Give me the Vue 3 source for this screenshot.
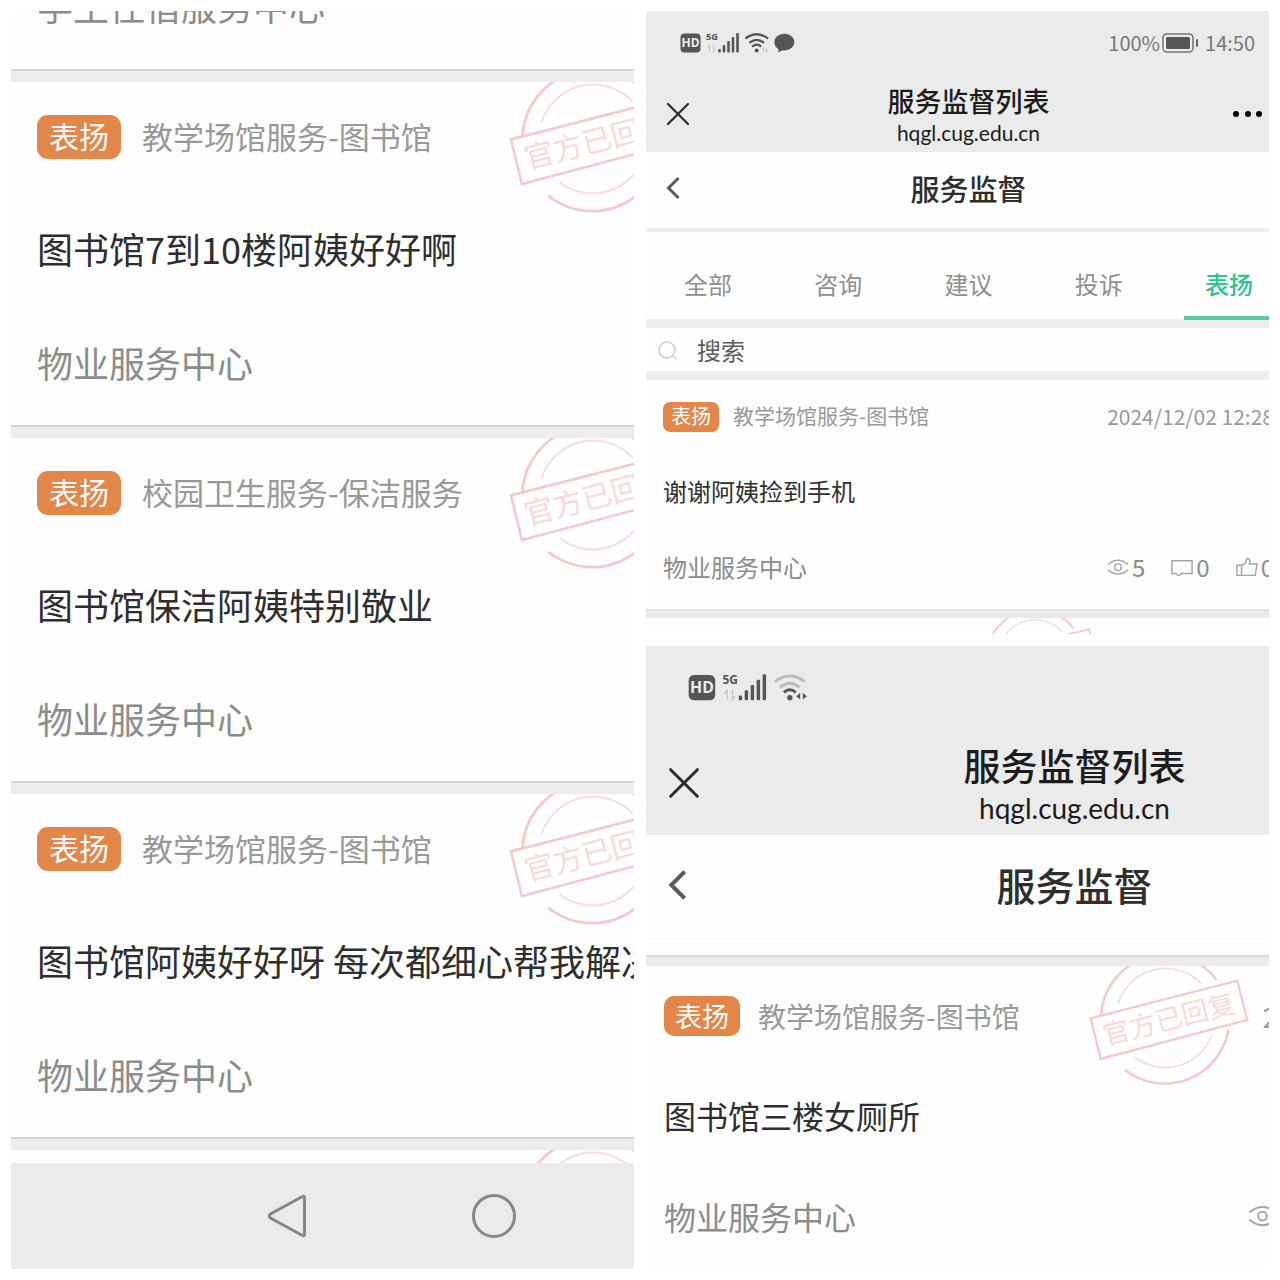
<template>
  <main class="collage">
    <section v-for="panel in panels" :key="panel.name" class="panel" :class="panel.name">
      <div class="screen">
        <!-- 微信顶部栏 -->
        <header v-if="panel.header" class="wx-head">
          <div class="status">
            <svg class="status-icons" viewBox="0 0 116 22">
              <rect x="0.5" y="1.5" width="20" height="19" rx="4" fill="#555" />
              <text x="10.5" y="15" text-anchor="middle" class="hd">HD</text>
              <text x="26" y="8" class="net">5G</text>
              <path d="M29.5 20v-7l-2 2.5M33.5 13v7l2-2.5" class="faint" />
              <g fill="#555">
                <rect x="38.2" y="17" width="2.6" height="3.5" rx="1" />
                <rect x="42.7" y="13" width="2.6" height="7.5" rx="1" />
                <rect x="47.2" y="9" width="2.6" height="11.5" rx="1" />
                <rect x="51.7" y="5" width="2.6" height="15.5" rx="1" />
                <rect x="56.2" y="1" width="2.6" height="19.5" rx="1" />
              </g>
              <g fill="none" stroke-width="2.2">
                <path d="M65.5 6.5Q76.7-2 88 6.5" :stroke="panel.weakWifi ? '#bcbcbc' : '#555'" />
                <path d="M69.3 10.8Q76.7 4.8 84 10.8" :stroke="panel.weakWifi ? '#bcbcbc' : '#555'" />
                <path d="M72.2 14.6Q76.7 10.8 81.2 14.6" stroke="#555" />
              </g>
              <circle cx="76.7" cy="18.6" r="2" fill="#555" />
              <path v-if="panel.weakWifi" d="M84.5 15v5l-3-2.5zM86.5 15v5l3-2.5z" fill="#555" />
              <template v-else>
                <path d="M83.5 20v-4.5l-1.5 2M86.5 15.5v4.5l1.5-2" class="faint" />
                <path
                  d="M104.300 1.8c5.600 0 10 3.600 10 8.300s-4.400 8.400-10 8.400c-.8 0-1.5 0-2.200-.2-1 1-2.300 1.800-4 2.300.4-1 .5-2.200.3-3.300-2.500-1.500-4-4.200-4-7.200 0-4.700 4.300-8.300 9.900-8.300z"
                  fill="#555"
                />
              </template>
            </svg>
            <div class="status-right">
              <span>100%</span>
              <svg class="battery" viewBox="0 0 37 20">
                <rect x="1" y="1" width="30" height="18" rx="4" fill="none" stroke="#777" stroke-width="1.6" />
                <rect x="4" y="4" width="24" height="12" rx="1.5" fill="#555" />
                <rect x="34" y="6" width="2" height="8" rx="1" fill="#666" />
              </svg>
              <time>14:50</time>
            </div>
          </div>
          <div class="wx-nav">
            <button class="icon-btn" aria-label="关闭">
              <svg class="close" viewBox="0 0 24 24"><path d="M2 2l20 20M22 2L2 22" /></svg>
            </button>
            <div class="wx-title">
              <h1>服务监督列表</h1>
              <p>hqgl.cug.edu.cn</p>
            </div>
            <button class="icon-btn more" aria-label="更多">
              <svg width="40" height="8" viewBox="0 0 40 8">
                <circle cx="5" cy="4" r="3" />
                <circle cx="17" cy="4" r="3" />
                <circle cx="28" cy="4" r="3" />
              </svg>
            </button>
          </div>
        </header>

        <!-- 页面标题 -->
        <div v-if="panel.header" class="page-bar">
          <button class="icon-btn" aria-label="返回">
            <svg class="back" viewBox="0 0 16 24"><path d="M12.500 2L2.500 12l10 10" /></svg>
          </button>
          <h2>服务监督</h2>
        </div>

        <!-- 分类和搜索 -->
        <template v-if="panel.filter">
          <nav class="tabs">
            <button
              v-for="tab in tabs"
              :key="tab"
              :class="{ active: tab === current }"
              @click="current = tab"
            >
              {{ tab }}
            </button>
          </nav>
          <label class="search">
            <svg width="20" height="20" viewBox="0 0 20 20">
              <circle cx="9" cy="10" r="8" />
              <path d="M15 16l3.5 3.5" />
            </svg>
            <input v-model="keyword" type="text" placeholder="搜索" aria-label="搜索" />
          </label>
        </template>

        <!-- 评价列表 -->
        <ul class="list">
          <li v-if="panel.above" class="card-above">{{ panel.above }}</li>
          <li v-for="card in panel.cards" :key="card.title" class="card">
            <div class="card-head">
              <span class="badge">表扬</span>
              <span class="category">{{ card.category }}</span>
              <time v-if="card.date" class="date">{{ card.date }}</time>
            </div>
            <h3>{{ card.title }}</h3>
            <div class="card-foot">
              <span>物业服务中心</span>
              <div v-if="card.stats" class="stats">
                <span class="stat">
                  <svg viewBox="0 0 24 20">
                    <path d="M1 7Q12-2 23 7M1 13Q12 22 23 13" />
                    <circle cx="12" cy="10" r="3.6" />
                  </svg>
                  {{ card.stats[0] }}
                </span>
                <span class="stat">
                  <svg viewBox="0 0 24 20"><path d="M1 3h22v14H11l-3 3-2-3H1z" /></svg>
                  {{ card.stats[1] }}
                </span>
                <span class="stat">
                  <svg viewBox="0 0 24 20">
                    <path d="M1 8h5v11H1zM6 8l4-2 2-5.5c3 0 3.500 2 2.500 6H23l-2 12.500H6" />
                  </svg>
                  {{ card.stats[2] }}
                </span>
              </div>
            </div>
            <svg v-if="card.replied" class="stamp" viewBox="0 0 164 120">
              <use href="#stamp" />
            </svg>
          </li>
          <li v-if="panel.below" class="card-below">
            <svg class="stamp" viewBox="0 0 164 120"><use href="#stamp" /></svg>
          </li>
        </ul>

        <!-- 系统导航键 -->
        <footer v-if="panel.keys" class="keys">
          <button class="icon-btn" aria-label="返回键">
            <svg width="40" height="46" viewBox="0 0 40 46">
              <path d="M35.5 3.5Q37.5 2.5 37.5 5v36Q37.5 43.5 35.5 42.5L3.5 25Q1 23 3.5 21z" />
            </svg>
          </button>
          <button class="icon-btn" aria-label="主页键">
            <svg width="46" height="46" viewBox="0 0 46 46"><circle cx="23" cy="23" r="20.5" /></svg>
          </button>
        </footer>
      </div>
    </section>

    <!-- 官方已回复印章 -->
    <svg class="defs" width="0" height="0">
      <symbol id="stamp" viewBox="0 0 164 120">
        <g fill="none" stroke="#f5cacb">
          <path
            d="M13 50A64.5 64.5 0 0 1 128.7 14M140.3 64A64.5 64.5 0 0 1 37 104"
            stroke-width="2.6"
          />
          <path
            d="M30.3 37.3A49.5 49.5 0 0 1 113.7 18M123.7 69A49.5 49.5 0 0 1 47 91.3"
            stroke-width="1.8"
            stroke="#f9dcdc"
          />
          <path d="M2.7 52.3L149.3 14.7L159.3 54L12.7 93z" stroke-width="2.4" />
        </g>
        <text
          x="81"
          y="63"
          transform="rotate(-14.4 81 54)"
          text-anchor="middle"
          font-size="27"
          fill="#f8dada"
        >
          官方已回复
        </text>
      </symbol>
    </svg>
  </main>
</template>

<script setup>
import { ref } from 'vue'

const tabs = ['全部', '咨询', '建议', '投诉', '表扬']
const current = ref('表扬')
const keyword = ref('')

const panels = [
  {
    name: 'large',
    keys: true,
    above: '学生住宿服务中心',
    below: true,
    cards: [
      { category: '教学场馆服务-图书馆', title: '图书馆7到10楼阿姨好好啊', replied: true },
      { category: '校园卫生服务-保洁服务', title: '图书馆保洁阿姨特别敬业', replied: true },
      {
        category: '教学场馆服务-图书馆',
        title: '图书馆阿姨好好呀 每次都细心帮我解决',
        replied: true,
      },
    ],
  },
  {
    name: 'small',
    header: true,
    filter: true,
    below: true,
    cards: [
      {
        category: '教学场馆服务-图书馆',
        title: '谢谢阿姨捡到手机',
        date: '2024/12/02 12:28',
        stats: [5, 0, 0],
      },
    ],
  },
  {
    name: 'medium',
    header: true,
    weakWifi: true,
    cards: [
      {
        category: '教学场馆服务-图书馆',
        title: '图书馆三楼女厕所',
        date: '2024/12/02 12:28',
        stats: [12, 0, 0],
        replied: true,
      },
    ],
  },
]
</script>

<style>
body {
  margin: 0;
  background: #fff;
}
</style>

<style scoped>
.collage {
  display: grid;
  grid-template-columns: minmax(0, 1fr) minmax(0, 1fr);
  gap: 12px;
  padding: 11px;
  font-family: 'Noto Sans CJK SC', sans-serif;
  color: #2e2e2e;
}
.defs {
  position: absolute;
}
h1,
h2,
h3,
p,
ul {
  margin: 0;
  padding: 0;
  list-style: none;
}
button,
input {
  border: 0;
  padding: 0;
  background: none;
  font: inherit;
  color: inherit;
}
svg {
  display: block;
  flex: none;
}

/* 三块面板各自的尺寸 */
.panel {
  overflow: hidden;
  background: #fefefe;
}
.large {
  grid-row: span 2;
  --side: 26px;
  --text: 36px;
  --small-text: 31px;
  --badge-text: 30px;
  --badge-w: 84px;
  --badge-h: 44px;
  --badge-gap: 21px;
  --badge-radius: 11px;
  --row-head: 112px;
  --row-title: 108px;
  --row-foot: 123px;
  --lift: 4px;
  --band: 13px;
  --band-color: #ededf0;
  --band-line: #d4d4d8;
  --stamp-w: 180px;
  --stamp-right: -54px;
}
.small {
  --overflow: 22px;
  --side: 17px;
  --text: 24px;
  --small-text: 21px;
  --badge-text: 20px;
  --badge-w: 56px;
  --badge-h: 30px;
  --badge-gap: 14px;
  --badge-radius: 7px;
  --row-head: 75px;
  --row-title: 72px;
  --row-foot: 82px;
  --lift: 2px;
  --band: 9px;
  --band-color: #eaeaea;
  --band-line: #e2e2e2;
  --stamp-w: 123px;
  --stamp-right: 191px;
  --status-h: 64px;
  --nav-h: 77px;
  --nav-shift: 6px;
  --nav-line: 32px;
  --nav-title: 27px;
  --nav-url: 21px;
  --nav-side: 20px;
  --bar-h: 80px;
  --bar-title: 29px;
  --icon: 24px;
  --stat-icon: 22px;
  --stat-gap: 26px;
  --status-w: 116px;
}
.medium {
  --overflow: 234px;
  --side: 18px;
  --text: 32px;
  --small-text: 28px;
  --badge-text: 27px;
  --badge-w: 76px;
  --badge-h: 40px;
  --badge-gap: 18px;
  --badge-radius: 10px;
  --row-head: 102px;
  --row-title: 95px;
  --row-foot: 106px;
  --lift: 0px;
  --band: 11px;
  --band-color: #ebebeb;
  --band-line: #d9d9d9;
  --stamp-w: 164px;
  --stamp-right: 251px;
  --status-h: 84px;
  --nav-h: 105px;
  --nav-shift: 8px;
  --nav-line: 43px;
  --nav-title: 37px;
  --nav-url: 28px;
  --nav-side: 22px;
  --bar-h: 104px;
  --bar-title: 39px;
  --icon: 32px;
  --stat-icon: 29px;
  --stat-gap: 35px;
  --status-w: 154px;
}
/* 屏幕比可见区域更宽，右侧内容被截断 */
.screen {
  width: calc(100% + var(--overflow, 0px));
}

/* 顶部栏 */
.wx-head {
  background: #ebebeb;
}
.status {
  display: flex;
  align-items: center;
  justify-content: space-between;
  height: var(--status-h);
  padding: 0 36px 0 34px;
}
.medium .status {
  padding-left: 42px;
}
.status-icons {
  width: var(--status-w);
}
.hd {
  font: bold 12px 'Noto Sans', sans-serif;
  fill: #ebebeb;
}
.net {
  font: bold 9px 'Open Sans', sans-serif;
  fill: #555;
}
.faint {
  fill: none;
  stroke: #c4c4c4;
}
.status-right {
  display: flex;
  align-items: center;
  gap: 2px;
  font-size: 20px;
  line-height: 28px;
  color: #777;
}
.battery {
  width: 37px;
}
.status-right time {
  margin-left: 4px;
}
.wx-nav {
  display: grid;
  grid-template-columns: 80px 1fr 80px;
  align-items: center;
  height: var(--nav-h);
  padding: 0 var(--nav-side);
}
.wx-title {
  padding-top: var(--nav-shift);
  text-align: center;
  line-height: var(--nav-line);
  color: #1c1c1c;
}
.wx-title h1 {
  font-size: var(--nav-title);
  font-weight: 500;
}
.wx-title p {
  font-family: Lato, 'Noto Sans', sans-serif;
  font-size: var(--nav-url);
}
.icon-btn {
  display: flex;
  cursor: pointer;
}
.more {
  justify-self: end;
}
.close {
  width: var(--icon);
  fill: none;
  stroke: #2b2b2b;
  stroke-width: 2.2;
  stroke-linecap: round;
}
.page-bar {
  box-sizing: border-box;
  display: grid;
  grid-template-columns: 80px 1fr 80px;
  align-items: center;
  height: var(--bar-h);
  padding: 0 var(--nav-side) 4px;
}
.page-bar h2 {
  text-align: center;
  font-size: var(--bar-title);
  font-weight: 500;
  line-height: 1;
}
.back {
  height: var(--icon);
  fill: none;
  stroke: #5a5a5a;
  stroke-width: 3;
}
.small .page-bar {
  border-bottom: 4px solid #efefef;
}
.medium .page-bar {
  border-bottom: 1px solid #f7f7f7;
  margin-bottom: 16px;
}

/* 分类标签 */
.tabs {
  display: grid;
  grid-template-columns: repeat(5, 1fr);
  height: 87px;
  margin: 0 -3px;
  border-bottom: 9px solid #eee;
}
.tabs button {
  position: relative;
  padding-top: 15px;
  font-size: 24px;
  color: #8f8f8f;
  cursor: pointer;
}
.tabs .active {
  color: #2cc48c;
  font-weight: 500;
}
.tabs .active::after {
  content: '';
  position: absolute;
  left: 20px;
  right: 20px;
  bottom: -1px;
  height: 4px;
  background: #5cc8a2;
}
.search {
  display: flex;
  align-items: center;
  gap: 19px;
  height: 43px;
  padding-left: 12px;
  border-bottom: 9px solid #eee;
}
.search svg {
  fill: none;
  stroke: #cfcfcf;
  stroke-width: 1.6;
}
.search input {
  flex: 1;
  min-width: 0;
  height: 43px;
  font-size: 24px;
  outline: none;
}
.search input::placeholder {
  color: #5c5c5c;
  opacity: 1;
}

/* 评价卡片 */
.card,
.card-above {
  position: relative;
  box-sizing: border-box;
  border-bottom: var(--band) solid var(--band-color);
}
.card {
  padding: 0 var(--side);
  line-height: 1;
}
.card::before,
.card::after,
.card-above::after {
  content: '';
  position: absolute;
  left: 0;
  right: 0;
}
.card::before {
  top: var(--row-head);
  height: 1px;
  background: #f8f8f8;
}
/* 间隔带上沿的深色线 */
.card::after,
.card-above::after {
  top: 100%;
  height: 2px;
  background: var(--band-line);
}
.medium .card {
  border-bottom: 0;
  border-top: var(--band) solid var(--band-color);
}
.medium .card::after {
  top: calc(0px - var(--band));
}
.small .card::before {
  display: none;
}
.card-head {
  display: flex;
  align-items: center;
  box-sizing: border-box;
  height: var(--row-head);
  padding-bottom: 2px;
  font-size: var(--small-text);
  color: #999;
  white-space: nowrap;
}
.badge {
  box-sizing: border-box;
  width: var(--badge-w);
  height: var(--badge-h);
  margin-right: var(--badge-gap);
  border-radius: var(--badge-radius);
  background: #e28649;
  color: #fff;
  font-size: var(--badge-text);
  line-height: calc(var(--badge-h) - var(--lift));
  text-align: center;
}
.category {
  padding-bottom: var(--lift);
}
.date {
  margin-left: auto;
}
.card h3 {
  font-size: var(--text);
  font-weight: 400;
  line-height: var(--row-title);
  white-space: nowrap;
}
.card-foot {
  display: flex;
  align-items: center;
  justify-content: space-between;
  box-sizing: border-box;
  height: var(--row-foot);
  padding-bottom: var(--lift);
  font-size: var(--text);
  color: #8c8c8c;
}
.stats,
.stat {
  display: flex;
  align-items: center;
}
.stats {
  gap: var(--stat-gap);
}
.stat {
  gap: 3px;
}
.stat svg {
  width: var(--stat-icon);
  fill: none;
  stroke: #a5a5a5;
  stroke-width: 1.6;
}
.stamp {
  position: absolute;
  top: 0;
  right: var(--stamp-right);
  width: var(--stamp-w);
}
.card-above {
  display: flex;
  align-items: flex-end;
  height: 71px;
  padding: 0 var(--side) 37px;
  font-size: var(--text);
  line-height: 54px;
  color: #8c8c8c;
}
.card-below {
  position: relative;
  height: 16px;
  overflow: hidden;
}
.large .card-below {
  height: 13px;
}

/* 系统导航键 */
.keys {
  display: flex;
  justify-content: flex-end;
  align-items: center;
  gap: 164px;
  height: 106px;
  padding-right: 117px;
  background: #ebebeb;
}
.keys svg {
  fill: none;
  stroke: #868686;
  stroke-width: 3;
}
</style>
